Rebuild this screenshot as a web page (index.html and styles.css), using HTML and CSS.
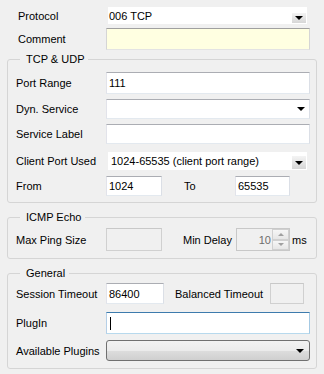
FILE: index.html
```html
<!DOCTYPE html>
<html lang="en">
<head>
    <meta charset="UTF-8">
    <meta name="viewport" content="width=device-width, initial-scale=1.0">
    <title>Protocol Settings</title>
    <link rel="stylesheet" href="styles.css">
</head>
<body>
    <div class="panel">
        <!-- Top rows -->
        <div class="row top r-protocol">
            <span class="lbl">Protocol</span>
            <div class="combo flat">006 TCP<span class="drop-btn"><span class="arrow"></span></span></div>
        </div>
        <div class="row top r-comment">
            <span class="lbl">Comment</span>
            <div class="field comment"></div>
        </div>

        <!-- TCP & UDP -->
        <fieldset class="group g-tcp">
            <legend>TCP &amp; UDP</legend>
            <div class="row r-port">
                <span class="lbl">Port Range</span>
                <div class="field">111</div>
            </div>
            <div class="row r-dyn">
                <span class="lbl">Dyn. Service</span>
                <div class="field combo-box"><span class="arrow"></span></div>
            </div>
            <div class="row r-svc">
                <span class="lbl">Service Label</span>
                <div class="field"></div>
            </div>
            <div class="row r-client">
                <span class="lbl">Client Port Used</span>
                <div class="combo flat">1024-65535 (client port range)<span class="drop-btn"><span class="arrow"></span></span></div>
            </div>
            <div class="row r-from">
                <span class="lbl">From</span>
                <div class="field small">1024</div>
                <span class="lbl-mid to">To</span>
                <div class="field small">65535</div>
            </div>
        </fieldset>

        <!-- ICMP Echo -->
        <fieldset class="group g-icmp">
            <legend>ICMP Echo</legend>
            <div class="row r-ping">
                <span class="lbl">Max Ping Size</span>
                <div class="field disabled small"></div>
                <span class="lbl-mid delay">Min Delay</span>
                <div class="spin">
                    <span class="spin-val">10</span>
                    <span class="spin-btns">
                        <span class="spin-btn"><span class="tri up"></span></span>
                        <span class="spin-btn"><span class="tri down"></span></span>
                    </span>
                </div>
                <span class="unit">ms</span>
            </div>
        </fieldset>

        <!-- General -->
        <fieldset class="group g-general">
            <legend>General</legend>
            <div class="row r-session">
                <span class="lbl">Session Timeout</span>
                <div class="field session">86400</div>
                <span class="lbl-mid balanced">Balanced Timeout</span>
                <div class="field disabled tiny"></div>
            </div>
            <div class="row r-plugin">
                <span class="lbl">PlugIn</span>
                <div class="field focused"><span class="caret"></span></div>
            </div>
            <div class="row r-avail">
                <span class="lbl">Available Plugins</span>
                <div class="button-combo"><span class="arrow"></span></div>
            </div>
        </fieldset>
    </div>
</body>
</html>
```

FILE: styles.css
```css
/* Reset */
* {
    margin: 0;
    padding: 0;
    box-sizing: border-box;
}

body {
    background: #f0f0f0;
    font-family: "Liberation Sans", Arial, sans-serif;
    font-size: 11px;
    color: #000;
}

.panel {
    padding: 7px 0 0 7px;
    width: 317px;
}

/* Generic rows */
.row {
    display: flex;
    align-items: center;
}

.lbl {
    flex: none;
    width: 90px;
    white-space: nowrap;
}

.top .lbl {
    width: 99px;
    padding-left: 11px;
}

.lbl-mid {
    flex: none;
    white-space: nowrap;
}

/* Text boxes */
.field {
    flex: 1;
    height: 20px;
    background: #fff;
    border: 1px solid;
    border-color: #abadb3 #dbdfe6 #e3e9ef #e2e3ea;
    padding: 0 2px;
    display: flex;
    align-items: center;
    white-space: nowrap;
}

.field.comment {
    background: #ffffe1;
    height: 22px;
    border-color: #a0a0a0 #d5d5d5 #e3e3e3 #d5d5d5;
}

.field.small {
    flex: none;
    width: 56px;
}

.field.disabled {
    background: #f0f0f0;
    border-color: #c8c8c8 #d0d0d0 #d0d0d0 #d0d0d0;
}

.field.focused {
    border-color: #3d7bad #a4c9e3 #b7d9ed #b5cfe7;
}

.caret {
    width: 1px;
    height: 13px;
    background: #000;
    margin-left: 1px;
}

/* Flat combo (no frame) */
.combo {
    position: relative;
    background: #fff;
    display: flex;
    align-items: center;
    padding-left: 1px;
    white-space: nowrap;
}

.drop-btn {
    position: absolute;
    right: 1px;
    top: 6px;
    bottom: 1px;
    width: 14px;
    background: linear-gradient(#f4f4f4, #d6d6d6);
    display: flex;
    align-items: center;
    justify-content: center;
}

.arrow {
    width: 0;
    height: 0;
    border-left: 4px solid transparent;
    border-right: 4px solid transparent;
    border-top: 4px solid #000;
}

.combo-box {
    justify-content: flex-end;
    padding-right: 4px;
}

.button-combo {
    flex: 1;
    height: 21px;
    border: 1px solid #707070;
    border-radius: 3px;
    background: linear-gradient(#f2f2f2 0%, #ebebeb 50%, #dddddd 51%, #cfcfcf 100%);
    display: flex;
    align-items: center;
    justify-content: flex-end;
    padding-right: 5px;
}

/* Group boxes */
.group {
    width: 310px;
    min-width: 0;
    border: 1px solid #d5d5d5;
    border-radius: 3px;
    padding: 0 6px 6px 8px;
}

.group legend {
    margin-left: 4px;
    padding: 0 4px 0 6px;
    line-height: 14px;
}

/* Top rows */
.r-protocol {
    height: 17px;
}

.r-protocol .combo,
.r-client .combo {
    margin-left: 2px;
    width: 199px;
    height: 17px;
}

.r-protocol .drop-btn {
    top: 6px;
}

.r-comment {
    margin-top: 4px;
}

.r-comment .field {
    flex: none;
    width: 204px;
}

/* TCP & UDP group */
.g-tcp {
    margin-top: 2px;
}

.r-port {
    margin-top: 6px;
}

.r-port .field {
    height: 22px;
}

.r-dyn,
.r-svc {
    margin-top: 5px;
}

.r-client {
    margin-top: 8px;
}

.r-client .combo {
    height: 18px;
    padding-left: 3px;
}

.r-client .drop-btn {
    top: 4px;
}

.r-from {
    margin-top: 6px;
}

.to {
    margin-left: 22px;
    width: 51px;
}

.r-from .field.small + .to + .field {
    width: 55px;
}

/* ICMP Echo group */
.g-icmp {
    margin-top: 7px;
    padding-bottom: 7px;
}

.r-ping {
    margin-top: 4px;
}

.r-ping .field {
    height: 23px;
}

.delay {
    margin-left: 21px;
    width: 53px;
}

.spin {
    width: 54px;
    height: 23px;
    border: 1px solid #c8c8c8;
    background: #f0f0f0;
    display: flex;
    align-items: stretch;
}

.spin-val {
    flex: 1;
    text-align: right;
    color: #6d6d6d;
    padding-right: 1px;
    display: flex;
    align-items: center;
    justify-content: flex-end;
}

.spin-btns {
    width: 17px;
    display: flex;
    flex-direction: column;
}

.spin-btn {
    flex: 1;
    border: 1px solid #d0d0d0;
    background: linear-gradient(#f6f6f6, #e6e6e6);
    display: flex;
    align-items: center;
    justify-content: center;
}

.tri {
    width: 0;
    height: 0;
    border-left: 3px solid transparent;
    border-right: 3px solid transparent;
}

.tri.up {
    border-bottom: 3px solid #a0a0a0;
}

.tri.down {
    border-top: 3px solid #a0a0a0;
}

.unit {
    margin-left: 2px;
}

/* General group */
.g-general {
    margin-top: 7px;
    padding-bottom: 7px;
}

.r-session {
    margin-top: 3px;
}

.r-session .field {
    height: 21px;
}

.field.session {
    flex: none;
    width: 58px;
}

.balanced {
    margin-left: 11px;
    width: 95px;
}

.field.tiny {
    flex: none;
    width: 34px;
}

.r-plugin {
    margin-top: 8px;
}

.r-plugin .field {
    height: 22px;
}

.r-avail {
    margin-top: 6px;
}
```
